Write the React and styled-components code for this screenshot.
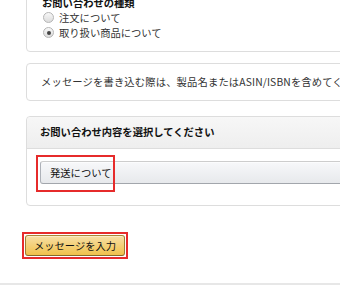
import styled, { createGlobalStyle } from "styled-components";

const GlobalStyle = createGlobalStyle`
  html, body {
    margin: 0;
    padding: 0;
    overflow: hidden;
    background: #fff;
  }
  body {
    font-family: "Noto Sans CJK JP", "Liberation Sans", sans-serif;
    font-size: 10.3px;
    color: #333;
  }
`;

const Page = styled.div`
  width: 600px;
  margin-top: -17px;
`;

const Content = styled.div`
  padding-left: 26px;
  display: flex;
  flex-direction: column;
`;

const Box = styled.section`
  border: 1px solid #ddd;
  border-radius: 4px;
  margin-top: ${(p) => p.$top || 0}px;
  background: #fff;
`;

const TypeBox = styled(Box)`
  padding: 12px 15px 11px;
`;

const Title = styled.h3`
  margin: 0;
  font-size: 10.3px;
  line-height: 14px;
  font-weight: bold;
  color: #111;
`;

const RadioRow = styled.label`
  display: flex;
  align-items: center;
  gap: 5px;
  height: 15px;
  line-height: 15px;
  padding-left: 1px;
`;

const Radio = styled.span`
  width: 9px;
  height: 9px;
  border-radius: 50%;
  border: 1px solid #b5b5b5;
  background: linear-gradient(#f8f8f8, #dcdcdc);
  display: flex;
  align-items: center;
  justify-content: center;
  &::after {
    content: "";
    width: 4px;
    height: 4px;
    border-radius: 50%;
    background: ${(p) => (p.$checked ? "#444" : "transparent")};
  }
`;

const NoteBox = styled(Box)`
  padding: 11px 14px;
  line-height: 14px;
  white-space: nowrap;
  letter-spacing: 0.15px;
`;

const Header = styled.div`
  padding: 8px 13px 9px;
  line-height: 14px;
  font-weight: bold;
  color: #111;
  background: linear-gradient(#f7f7f7, #eeeeee);
  border-bottom: 1px solid #ddd;
  border-radius: 4px 4px 0 0;
`;

const Body = styled.div`
  position: relative;
  padding: 12px 13px 21px;
`;

const Select = styled.div`
  height: 21px;
  line-height: 21px;
  padding-left: 9px;
  border: 1px solid #adb1b8;
  border-color: #cdcdcd #adb1b8 #a2a6ac;
  border-radius: 3px;
  background: linear-gradient(#f7f8fa, #e7e9ec);
  color: #111;
  box-shadow: 0 1px 0 rgba(255, 255, 255, 0.6) inset;
`;

const Highlight = styled.div`
  position: absolute;
  left: 9px;
  top: 6px;
  width: 75px;
  height: 33px;
  border: 2px solid #e62b2b;
`;

const ButtonFrame = styled.span`
  margin: 26px 0 0 -4px;
  align-self: flex-start;
  display: flex;
  padding: 1px;
  border: 2px solid #e62b2b;
`;

const Button = styled.button`
  width: 100px;
  height: 21px;
  padding: 0;
  font-family: inherit;
  font-size: 10.3px;
  color: #111;
  border: 1px solid;
  border-color: #a88734 #9c7e31 #846a29;
  border-radius: 3px;
  background: linear-gradient(#f7dfa5, #f0c14b);
  box-shadow: 0 1px 0 rgba(255, 255, 255, 0.4) inset;
`;

const Footer = styled.div`
  margin-top: 24px;
  height: 2px;
  background: #e7e7e7;
`;

export default function App() {
  return (
    <Page>
      <GlobalStyle />
      <Content>
        <TypeBox>
          <Title>お問い合わせの種類</Title>
          <RadioRow>
            <Radio />
            注文について
          </RadioRow>
          <RadioRow>
            <Radio $checked />
            取り扱い商品について
          </RadioRow>
        </TypeBox>
        <NoteBox $top={11}>
          メッセージを書き込む際は、製品名またはASIN/ISBNを含めてください。
        </NoteBox>
        <Box $top={15}>
          <Header>お問い合わせ内容を選択してください</Header>
          <Body>
            <Select>発送について</Select>
            <Highlight />
          </Body>
        </Box>
        <ButtonFrame>
          <Button>メッセージを入力</Button>
        </ButtonFrame>
      </Content>
      <Footer />
    </Page>
  );
}
